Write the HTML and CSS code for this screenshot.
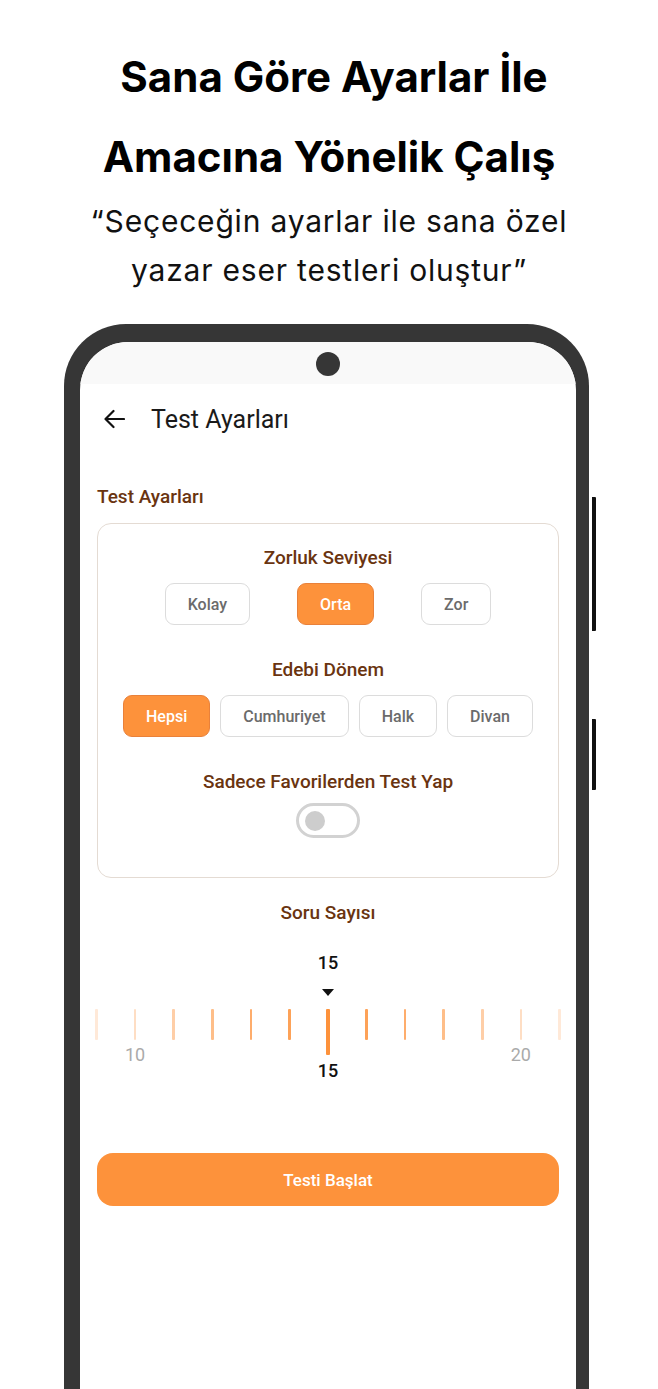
FILE: index.html
```html
<!DOCTYPE html>
<html lang="tr">
<head>
<meta charset="utf-8">
<title>Test Ayarları</title>
<link rel="stylesheet" href="styles.css">
</head>
<body>
<div class="page">
  <header class="hero">
    <h1 class="hero-title">&nbsp;Sana Göre Ayarlar İle<br>Amacına Yönelik Çalış</h1>
    <p class="hero-sub">“Seçeceğin ayarlar ile sana özel<br>yazar eser testleri oluştur”</p>
  </header>

  <div class="phone">
    <span class="side-btn side-btn-power"></span>
    <span class="side-btn side-btn-vol"></span>
    <div class="screen">
      <div class="status"><span class="camera"></span></div>
      <div class="appbar">
        <svg class="back" width="22" height="20" viewBox="0 0 22 20" aria-hidden="true">
          <path d="M21 10H2.5M10.5 2L2.5 10l8 8" fill="none" stroke="#111" stroke-width="2.2" stroke-linecap="round" stroke-linejoin="round"/>
        </svg>
        <span class="appbar-title">Test Ayarları</span>
      </div>

      <div class="content">
        <div class="section-label">Test Ayarları</div>
        <div class="card">
          <div class="group">
            <div class="group-title">Zorluk Seviyesi</div>
            <div class="chips chips-wide">
              <span class="chip">Kolay</span>
              <span class="chip chip-active">Orta</span>
              <span class="chip">Zor</span>
            </div>
          </div>
          <div class="group">
            <div class="group-title">Edebi Dönem</div>
            <div class="chips">
              <span class="chip chip-active">Hepsi</span>
              <span class="chip">Cumhuriyet</span>
              <span class="chip">Halk</span>
              <span class="chip">Divan</span>
            </div>
          </div>
          <div class="group group-toggle">
            <div class="group-title">Sadece Favorilerden Test Yap</div>
            <span class="toggle"><span class="knob"></span></span>
          </div>
        </div>

        <div class="count-title">Soru Sayısı</div>
        <div class="count-value">15</div>
        <div class="pointer"></div>
        <div class="ruler">
          <span class="tick"><span class="line" style="opacity:0.2"></span></span>
          <span class="tick"><span class="line" style="opacity:0.3"></span><span class="tick-label">10</span></span>
          <span class="tick"><span class="line" style="opacity:0.45"></span></span>
          <span class="tick"><span class="line" style="opacity:0.6"></span></span>
          <span class="tick"><span class="line" style="opacity:0.75"></span></span>
          <span class="tick"><span class="line" style="opacity:0.85"></span></span>
          <span class="tick tick-center"><span class="line"></span><span class="tick-label tick-label-main">15</span></span>
          <span class="tick"><span class="line" style="opacity:0.85"></span></span>
          <span class="tick"><span class="line" style="opacity:0.75"></span></span>
          <span class="tick"><span class="line" style="opacity:0.6"></span></span>
          <span class="tick"><span class="line" style="opacity:0.45"></span></span>
          <span class="tick"><span class="line" style="opacity:0.3"></span><span class="tick-label">20</span></span>
          <span class="tick"><span class="line" style="opacity:0.2"></span></span>
        </div>

        <button class="start">Testi Başlat</button>
      </div>
    </div>
  </div>
</div>
</body>
</html>
```

FILE: styles.css
```css
* { box-sizing: border-box; }

html, body {
  margin: 0;
  padding: 0;
  background: #ffffff;
}

.page {
  width: 658px;
  height: 1389px;
  overflow: hidden;
  padding-top: 37px;
}

.hero {
  text-align: center;
  color: #000;
}

.hero-title {
  margin: 0;
  font-family: "Inter", "Liberation Sans", sans-serif;
  font-weight: 700;
  font-size: 42px;
  line-height: 80px;
  letter-spacing: 0;
}

.hero-sub {
  margin: 0;
  font-family: "Inter", "Liberation Sans", sans-serif;
  font-weight: 400;
  font-size: 30px;
  line-height: 49px;
  letter-spacing: 0.8px;
  color: #111;
}

.phone {
  position: relative;
  margin: 29px 0 0 64px;
  width: 525px;
  height: 1120px;
  background: #363636;
  border-style: solid;
  border-color: #363636;
  border-width: 18px 13px 0 16px;
  border-radius: 62px 62px 0 0;
}

.side-btn {
  position: absolute;
  left: 512px;
  width: 4px;
  background: #111;
  border-radius: 0 1px 1px 0;
}
.side-btn-power { top: 155px; height: 134px; }
.side-btn-vol { top: 377px; height: 71px; }

.screen {
  height: 100%;
  background: #fff;
  border-radius: 48px 48px 0 0;
  overflow: hidden;
  font-family: "Roboto", "Liberation Sans", sans-serif;
}

.status {
  height: 42px;
  background: #f9f9f9;
  display: flex;
  justify-content: center;
  align-items: center;
  padding-top: 2px;
}

.camera {
  width: 24px;
  height: 24px;
  border-radius: 50%;
  background: #363636;
}

.appbar {
  height: 70px;
  display: flex;
  align-items: center;
  padding-left: 23px;
  gap: 26px;
}

.back { display: block; }

.appbar-title {
  font-size: 25px;
  color: #1a1a1a;
  font-weight: 400;
}

.content {
  padding: 0 17px;
}

.section-label {
  margin-top: 33px;
  font-size: 19px;
  line-height: 20px;
  font-weight: 500;
  color: #6a3410;
}

.card {
  margin-top: 16px;
  border: 1px solid #e4dbd3;
  border-radius: 14px;
  padding: 24px 0 39px;
  display: flex;
  flex-direction: column;
  gap: 35px;
}

.group {
  display: flex;
  flex-direction: column;
  align-items: center;
  gap: 15px;
}

.group-toggle { gap: 11px; }

.group-title {
  font-size: 19px;
  line-height: 20px;
  font-weight: 500;
  color: #6a3410;
}

.chips {
  display: flex;
  justify-content: center;
  gap: 10px;
}

.chips-wide { gap: 47px; }

.chip {
  height: 42px;
  display: flex;
  align-items: center;
  justify-content: center;
  padding: 0 22px;
  border: 1px solid #dcdcdc;
  border-radius: 9px;
  font-size: 16px;
  font-weight: 500;
  color: #6b6b6b;
  background: #fff;
}

.chip-active {
  background: #fd923b;
  border-color: #e9813a;
  color: #fff;
}

.toggle {
  width: 64px;
  height: 35px;
  border: 3px solid #d2d2d2;
  border-radius: 18px;
  display: flex;
  align-items: center;
  padding-left: 6px;
}

.knob {
  width: 20px;
  height: 20px;
  border-radius: 50%;
  background: #cdcdcd;
}

.count-title {
  margin-top: 25px;
  text-align: center;
  font-size: 19px;
  line-height: 20px;
  font-weight: 500;
  color: #6a3410;
}

.count-value {
  margin-top: 30px;
  text-align: center;
  font-size: 18px;
  line-height: 20px;
  font-weight: 500;
  color: #111;
}

.pointer {
  margin: 16px auto 0;
  width: 0;
  height: 0;
  border-left: 6px solid transparent;
  border-right: 6px solid transparent;
  border-top: 7px solid #111;
}

.ruler {
  margin: 13px -2px 0;
  display: flex;
  justify-content: space-between;
  align-items: flex-start;
  height: 72px;
}

.tick {
  width: 3px;
  display: flex;
  flex-direction: column;
  align-items: center;
}

.line {
  display: block;
  width: 2.6px;
  height: 31px;
  background: #fd923b;
  border-radius: 1px;
}

.tick-center .line {
  width: 3.4px;
  height: 46px;
}

.tick-label {
  margin-top: 5px;
  line-height: 20px;
  font-size: 18px;
  color: #aaaaaa;
  white-space: nowrap;
}

.tick-label-main {
  margin-top: 6px;
  color: #111;
  font-weight: 500;
}

.start {
  display: block;
  width: 100%;
  margin-top: 72px;
  height: 53px;
  border: none;
  border-radius: 16px;
  background: #fd923b;
  color: #fff;
  font-family: "Roboto", "Liberation Sans", sans-serif;
  font-size: 17px;
  font-weight: 500;
}
```
